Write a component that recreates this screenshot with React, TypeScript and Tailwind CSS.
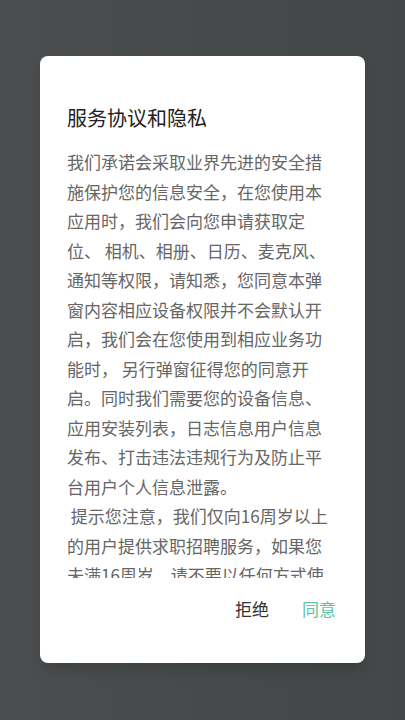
const BODY =
  "我们承诺会采取业界先进的安全措施保护您的信息安全，在您使用本应用时，我们会向您申请获取定位、 相机、相册、日历、麦克风、通知等权限，请知悉，您同意本弹窗内容相应设备权限并不会默认开启，我们会在您使用到相应业务功能时， 另行弹窗征得您的同意开启。同时我们需要您的设备信息、应用安装列表，日志信息用户信息发布、打击违法违规行为及防止平台用户个人信息泄露。\n 提示您注意，我们仅向16周岁以上的用户提供求职招聘服务，如果您未满16周岁，请不要以任何方式使";

export default function App() {
  return (
    <div
      className="h-[720px] w-full overflow-hidden bg-gradient-to-r from-[#4b4d4e] to-[#434748] pt-[56px]"
      style={{ fontFamily: '"Noto Sans CJK SC", "Noto Sans", sans-serif' }}
    >
      <div className="mx-auto flex h-[607px] w-[325px] flex-col rounded-[8px] bg-white shadow-lg">
        <h2 className="px-[27px] pt-[48px] text-[20px] leading-[28px] font-normal text-[#222]">
          服务协议和隐私
        </h2>

        <div className="mt-[15px] h-[431px] overflow-hidden px-[27px]">
          <p className="whitespace-pre-wrap text-[17px] leading-[29.5px] text-[#666]">{BODY}</p>
        </div>

        <div className="flex justify-end gap-[17px] pt-[14px] pr-[21px]">
          <button className="h-[34px] px-2 text-[17px] leading-[34px] text-[#333]">拒绝</button>
          <button className="h-[34px] px-2 text-[17px] leading-[34px] text-[#5ec29c]">同意</button>
        </div>
      </div>
    </div>
  );
}
